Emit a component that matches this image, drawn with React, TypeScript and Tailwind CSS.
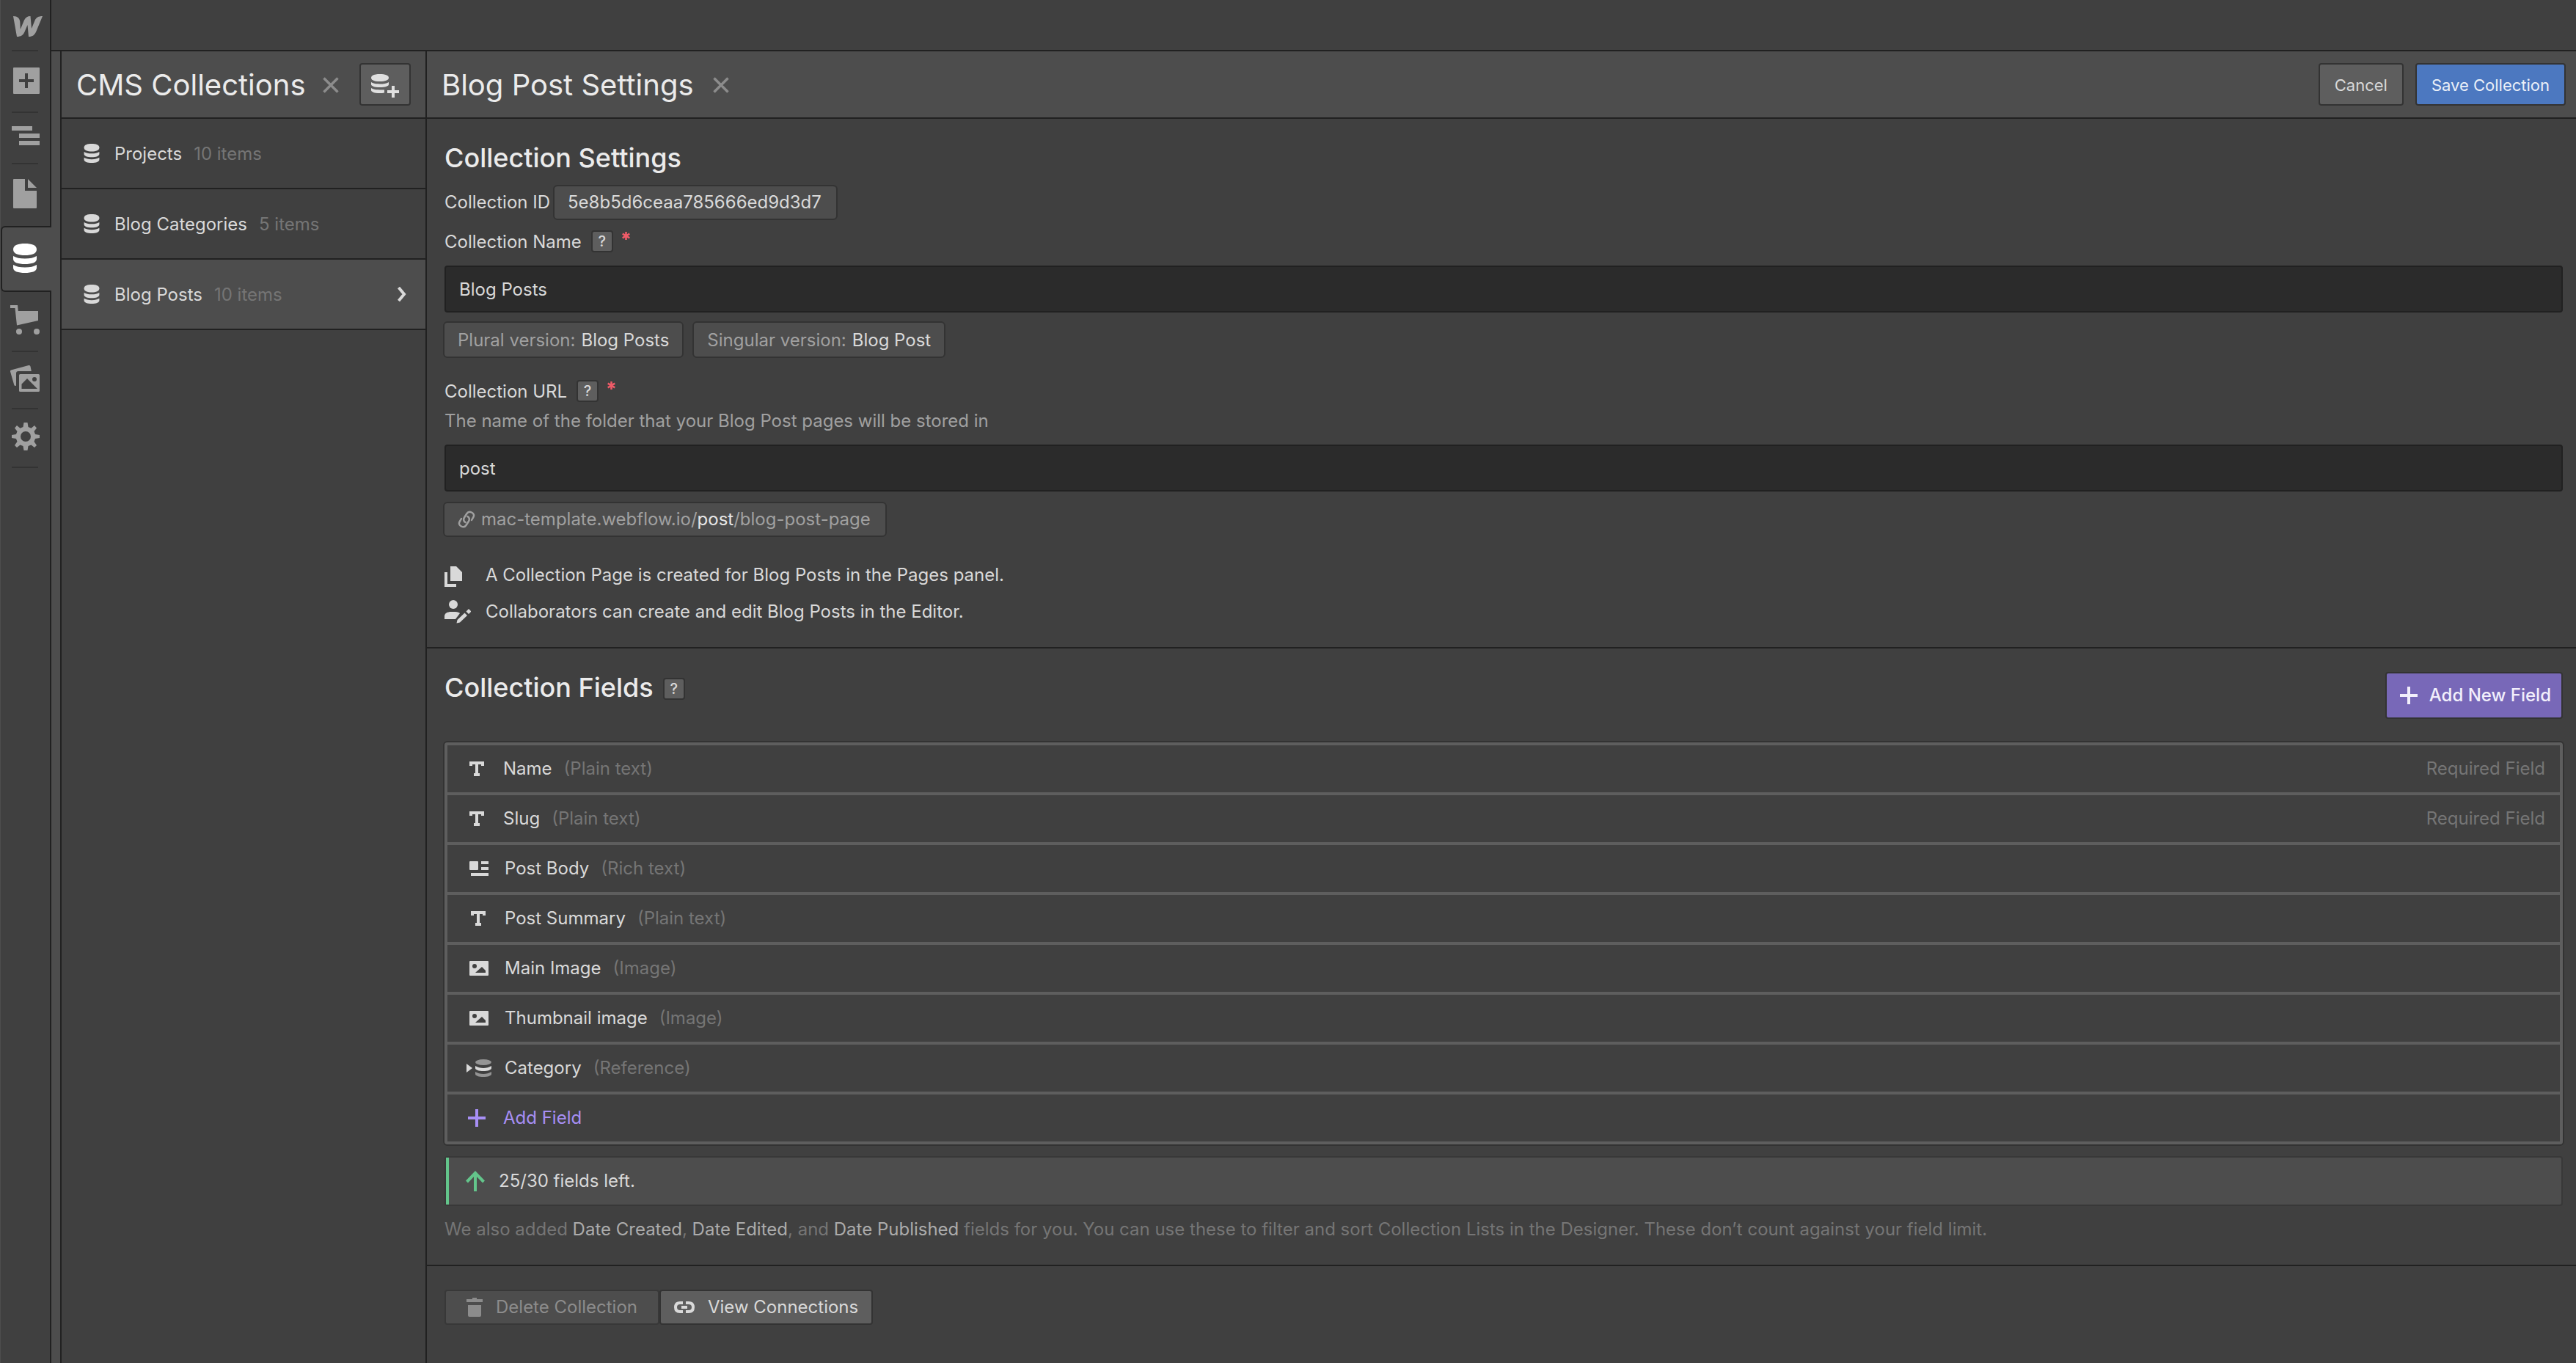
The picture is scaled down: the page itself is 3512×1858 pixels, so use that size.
import type { ReactNode } from "react";

type IconProps = { className?: string };

function LogoIcon() {
  return (
    <svg className="h-7 w-10" viewBox="0 0 40 28" fill="currentColor" aria-hidden="true">
      <path d="M0 0C6 0 9 3 9.300 8L9.800 18L15 5.500C16.500 2 19.500 0 23.500 0L25 17L29.500 6C31 2 34.500 0 40 0L31.500 20.500C29.500 25.500 26.500 28 21 28L19.500 12L15.500 21.500C13.500 26 10.500 28 5 28Z" />
    </svg>
  );
}

function AddIcon() {
  return (
    <svg className="size-9" viewBox="0 0 36 36" fill="currentColor" aria-hidden="true">
      <path fillRule="evenodd" d="M1 0H35Q36 0 36 1V35Q36 36 35 36H1Q0 36 0 35V1Q0 0 1 0ZM16 8V16H8V20H16V28H20V20H28V16H20V8Z" />
    </svg>
  );
}

function NavigatorIcon() {
  return (
    <svg className="h-[26px] w-[38px]" viewBox="0 0 38 26" fill="currentColor" aria-hidden="true">
      <path d="M0 0H28V6H0ZM10 10H38V16H10ZM10 20H38V26H10Z" />
    </svg>
  );
}

function PageIcon() {
  return (
    <svg className="h-10 w-8" viewBox="0 0 32 40" fill="currentColor" aria-hidden="true">
      <path d="M1 0H16V16H32V39Q32 40 31 40H1Q0 40 0 39V1Q0 0 1 0ZM20 0L32 12H20Z" />
    </svg>
  );
}

function DatabaseIcon({ className }: IconProps) {
  return (
    <svg className={className} viewBox="0 0 32 40" fill="currentColor" aria-hidden="true">
      <path d="M0 8C0 2 7 0 16 0S32 2 32 8S25 16 16 16S0 14 0 8Z" />
      <path d="M0 17C4 19.500 9 20.500 16 20.500S28 19.500 32 17V21C32 26 25 28 16 28S0 26 0 21Z" />
      <path d="M0 29C4 31.500 9 32.500 16 32.500S28 31.500 32 29V33C32 38 25 40 16 40S0 38 0 33Z" />
    </svg>
  );
}

function CartIcon() {
  return (
    <svg className="size-10" viewBox="0 0 40 40" fill="currentColor" aria-hidden="true">
      <path d="M0 0H10L10.800 8H38V21L9 27.500L6.500 4H0Z" />
      <circle cx="12" cy="36" r="4" />
      <circle cx="36" cy="36" r="4" />
    </svg>
  );
}

function AssetsIcon() {
  return (
    <svg className="h-9 w-10" viewBox="0 0 40 36" fill="currentColor" aria-hidden="true">
      <path d="M1 6.500L25 0Q27 -0.300 27.500 1.500L28.800 8H11Q8 8 8 11V28L5.500 27.500L0 8.500Q-0.300 7 1 6.500Z" />
      <path fillRule="evenodd" d="M13.500 12H38.500Q40 12 40 13.500V34.500Q40 36 38.500 36H13.500Q12 36 12 34.500V13.500Q12 12 13.500 12ZM15.500 32H37L23 18L15.500 25.500ZM33 16A3 3 0 1 0 33 22A3 3 0 1 0 33 16Z" />
    </svg>
  );
}

function GearIcon() {
  return (
    <svg className="size-[38px]" viewBox="0 0 38 38" fill="currentColor" aria-hidden="true">
      <path fillRule="evenodd" d="M16.500 0H21.500L22.500 6L26.500 7.800L31 4L34 7.500L30.500 12L32 16L38 17V21L32 22L30.500 26L34 31L31 34L26.500 30.500L22.500 32L21.500 38H16.500L15.500 32L11.500 30.500L7 34L4 31L7.500 26L6 22L0 21V17L6 16L7.500 12L4 7.500L7 4L11.500 7.800L15.500 6ZM19 12A7 7 0 1 0 19 26A7 7 0 1 0 19 12Z" />
    </svg>
  );
}

function CloseIcon() {
  return (
    <svg className="size-[22px]" viewBox="0 0 22 22" fill="none" stroke="currentColor" strokeWidth="3.500" aria-hidden="true">
      <path d="M1.500 1.500L20.500 20.500M20.500 1.500L1.500 20.500" />
    </svg>
  );
}

function NewCollectionIcon() {
  return (
    <svg className="h-8 w-[38px]" viewBox="0 0 38 32" fill="currentColor" aria-hidden="true">
      <path d="M0 5C0 1.500 5 0 12 0S24 1.500 24 5S19 10 12 10S0 8.500 0 5Z" />
      <path d="M0 11C3 13 7 13.500 12 13.500S21 13 24 11V14C24 16.500 19 18 12 18S0 16.500 0 14Z" />
      <path d="M0 19C3 21 7 21.500 12 21.500H18V25.500C16 26 14 26 12 26C5 26 0 24.500 0 22Z" />
      <path d="M28 16H32V22H38V26H32V32H28V26H22V22H28Z" />
    </svg>
  );
}

function ChevronIcon() {
  return (
    <svg className="h-5 w-3" viewBox="0 0 12 20" fill="none" stroke="currentColor" strokeWidth="4" aria-hidden="true">
      <path d="M1.500 1L9 10L1.500 19" />
    </svg>
  );
}

function ChainIcon() {
  return (
    <svg className="size-6" viewBox="0 0 24 24" fill="none" stroke="currentColor" strokeWidth="2.500" strokeLinecap="round" aria-hidden="true">
      <path d="M10.500 16C8 14.500 7.500 12 9 9.500L12.500 4C14 1.700 16.500 1.200 19 2.500C22 4 22.800 6.500 21.300 9L19 13" />
      <path d="M13.500 8C16 9.500 16.500 12 15 14.500L11.500 20C10 22.300 7.500 22.800 5 21.500C2 20 1.200 17.500 2.700 15L5 11" />
    </svg>
  );
}

function PagesIcon() {
  return (
    <svg className="h-7 w-6" viewBox="0 0 24 28" fill="currentColor" aria-hidden="true">
      <path d="M8 0H16L24 8V20H8ZM0 8H4V24H16V28H0Z" />
    </svg>
  );
}

function EditorIcon() {
  return (
    <svg className="h-8 w-9" viewBox="0 0 36 32" fill="currentColor" aria-hidden="true">
      <ellipse cx="12" cy="6" rx="6" ry="6" />
      <path d="M0 26V22C0 18 4 16 9 16H15C18 16 20 17 21 18L15 26Z" />
      <path d="M27.500 17.500L31 21L21 30.500L16.500 31.500L17.500 27ZM29.500 15.500L33 12L36.500 15.500L33 19Z" />
    </svg>
  );
}

function TextIcon() {
  return (
    <svg className="size-5" viewBox="0 0 20 20" fill="currentColor" aria-hidden="true">
      <path d="M0 0H20V6H16V4H12V16H14V20H6V16H8V4H4V6H0Z" />
    </svg>
  );
}

function RichTextIcon() {
  return (
    <svg className="h-5 w-[26px]" viewBox="0 0 26 20" fill="currentColor" aria-hidden="true">
      <path d="M1 0H11Q12 0 12 1V11Q12 12 11 12H1Q0 12 0 11V1Q0 0 1 0ZM16 0H26V4H16ZM16 8H26V12H16ZM2 16H26V20H2Z" />
    </svg>
  );
}

function ImageIcon() {
  return (
    <svg className="h-5 w-[26px]" viewBox="0 0 26 20" fill="currentColor" aria-hidden="true">
      <path fillRule="evenodd" d="M1 0H25Q26 0 26 1V19Q26 20 25 20H1Q0 20 0 19V1Q0 0 1 0ZM7 4A3 3 0 1 0 7 10A3 3 0 1 0 7 4ZM8 16H22V13L17 8Z" />
    </svg>
  );
}

function ReferenceIcon() {
  return (
    <svg className="h-6 w-[34px]" viewBox="0 0 34 24" fill="currentColor" aria-hidden="true">
      <path d="M0 6L8 12L0 18Z" />
      <ellipse cx="23" cy="4" rx="11" ry="4" opacity="0.55" />
      <path d="M12 9C15 11 19 12 23 12S31 11 34 9V12C34 14.500 29 16 23 16S12 14.500 12 12Z" />
      <path opacity="0.55" d="M12 17C15 19 19 20 23 20S31 19 34 17V20C34 22.500 29 24 23 24S12 22.500 12 20Z" />
    </svg>
  );
}

function PlusIcon() {
  return (
    <svg className="size-6" viewBox="0 0 24 24" fill="currentColor" aria-hidden="true">
      <path d="M10 0H14V10H24V14H14V24H10V14H0V10H10Z" />
    </svg>
  );
}

function ArrowUpIcon() {
  return (
    <svg className="h-7 w-[26px]" viewBox="0 0 26 28" fill="none" stroke="currentColor" strokeWidth="4" aria-hidden="true">
      <path d="M13 28V4M1.500 15L13 3L24.500 15" />
    </svg>
  );
}

function TrashIcon() {
  return (
    <svg className="h-[26px] w-[22px]" viewBox="0 0 22 26" fill="currentColor" aria-hidden="true">
      <path d="M8 0H14V2H22V6H0V2H8ZM2 10H20V24Q20 26 18 26H4Q2 26 2 24Z" />
    </svg>
  );
}

function ConnectionIcon() {
  return (
    <svg className="h-4 w-7" viewBox="0 0 28 16" fill="currentColor" aria-hidden="true">
      <path d="M12 0V4H8Q4 4 4 8T8 12H12V16H8Q0 16 0 8T8 0ZM16 0H20Q28 0 28 8T20 16H16V12H20Q24 12 24 8T20 4H16ZM10 6H18V10H10Z" />
    </svg>
  );
}

function Divider() {
  return <div className="h-[2px] w-9 bg-[#333]" />;
}

function RailButton({ label, className, children }: { label: string; className: string; children: ReactNode }) {
  return (
    <button type="button" aria-label={label} className={className}>
      {children}
    </button>
  );
}

function Rail() {
  return (
    <nav aria-label="Tools" className="flex w-[70px] shrink-0 flex-col border-l border-[#4d4d4d] bg-[#404040] text-[#a0a0a0]">
      <div className="flex h-[308px] flex-col items-start border-r-2 border-[#212121] pl-[15px]">
        <RailButton label="Webflow" className="flex h-[68px] items-center pt-[4px] pl-[2px]"><LogoIcon /></RailButton>
        <Divider />
        <RailButton label="Add elements" className="flex h-[82px] items-center pb-[2px] pl-[2px]"><AddIcon /></RailButton>
        <Divider />
        <RailButton label="Navigator" className="flex h-[68px] items-center pb-[6px]"><NavigatorIcon /></RailButton>
        <Divider />
        <RailButton label="Pages" className="flex h-20 items-center pl-[2px]"><PageIcon /></RailButton>
      </div>
      <RailButton label="CMS" className="flex h-[90px] items-center rounded-l-md border-2 border-r-0 border-[#212121] bg-[#4d4d4d] pl-[15px] pb-[2px] text-white">
        <DatabaseIcon className="h-10 w-8" />
      </RailButton>
      <div className="flex flex-1 flex-col items-start border-r-2 border-[#212121] pl-[15px]">
        <RailButton label="Ecommerce" className="-ml-[2px] flex h-20 items-center pb-[4px]"><CartIcon /></RailButton>
        <Divider />
        <RailButton label="Assets" className="-ml-[2px] flex h-[76px] items-center pb-[4px]"><AssetsIcon /></RailButton>
        <Divider />
        <RailButton label="Settings" className="flex h-[78px] items-center pb-[4px]"><GearIcon /></RailButton>
        <Divider />
      </div>
    </nav>
  );
}

const collections = [
  { name: "Projects", count: "10 items", active: false },
  { name: "Blog Categories", count: "5 items", active: false },
  { name: "Blog Posts", count: "10 items", active: true },
];

function CollectionsPanel() {
  return (
    <aside className="flex w-[512px] shrink-0 border-r-2 border-[#212121]">
      <div className="w-3 shrink-0 bg-[#4d4d4d]" />
      <div className="flex flex-1 flex-col border-l-2 border-[#212121]">
        <header className="flex h-[92px] items-center border-b-2 border-[#212121] bg-[#4d4d4d] pl-5 pr-5">
          <h2 className="whitespace-nowrap pt-[2px] text-[40px] leading-[48px] text-[#ebebeb]">CMS Collections</h2>
          <button type="button" aria-label="Close collections" className="ml-auto pt-[2px] text-[#8c8c8c]"><CloseIcon /></button>
          <button type="button" aria-label="New collection" className="ml-7 flex h-[58px] w-[70px] items-center justify-center rounded border-2 border-[#333] bg-[#5e5e5e] pt-[4px] text-[#e0e0e0]">
            <NewCollectionIcon />
          </button>
        </header>
        <ul>
          {collections.map((item) => (
            <li key={item.name} className={item.active ? "border-b-2 border-[#212121] bg-[#4d4d4d]" : "border-b-2 border-[#212121]"}>
              <button type="button" className="flex h-[94px] w-full items-center pl-[30px] pr-[26px] text-left">
                <DatabaseIcon className="h-[26px] w-[22px] text-[#d9d9d9]" />
                <span className="ml-5 pt-[2px]">{item.name}</span>
                <span className="ml-4 pt-[2px] text-[#757575]">{item.count}</span>
                {item.active && <span className="ml-auto"><ChevronIcon /></span>}
              </button>
            </li>
          ))}
        </ul>
      </div>
    </aside>
  );
}

function Help({ className }: IconProps) {
  return (
    <span className={className}>
      <button type="button" aria-label="Help" className="flex size-[30px] items-center justify-center rounded border-2 border-[#333] bg-[#5e5e5e] text-[20px] font-medium leading-6 text-[#d9d9d9]">
        ?
      </button>
    </span>
  );
}

function FieldLabel({ htmlFor, children }: { htmlFor: string; children: ReactNode }) {
  return (
    <div className="flex h-[30px] items-center">
      <label htmlFor={htmlFor} className="pt-[2px]">{children}</label>
      <Help className="ml-[13px]" />
      <svg className="ml-3 mt-[2px] size-[11px] self-start text-[#ef5b68]" viewBox="0 0 11 11" stroke="currentColor" strokeWidth="2.500" aria-label="required">
        <path d="M5.500 0V11M0.700 2.700L10.300 8.300M10.300 2.700L0.700 8.300" />
      </svg>
    </div>
  );
}

const chip = "flex h-12 items-center rounded-md border-2 border-[#333] bg-[#4d4d4d] pl-[18px] pr-5 whitespace-nowrap";
const tallChip = "flex h-[50px] items-center rounded-md border-2 border-[#333] bg-[#4d4d4d] px-[18px] pt-[2px] whitespace-nowrap";
const textInput = "block h-16 w-full rounded border-2 border-[#212121] bg-[#2b2b2b] px-[18px] text-[#d9d9d9] outline-none";

const fields = [
  { name: "Name", type: "(Plain text)", icon: <TextIcon />, pad: "pl-[30px]", required: true },
  { name: "Slug", type: "(Plain text)", icon: <TextIcon />, pad: "pl-[30px]", required: true },
  { name: "Post Body", type: "(Rich text)", icon: <RichTextIcon />, pad: "pl-[30px]", required: false },
  { name: "Post Summary", type: "(Plain text)", icon: <TextIcon />, pad: "pl-8", required: false },
  { name: "Main Image", type: "(Image)", icon: <ImageIcon />, pad: "pl-[30px]", required: false },
  { name: "Thumbnail image", type: "(Image)", icon: <ImageIcon />, pad: "pl-[30px]", required: false },
  { name: "Category", type: "(Reference)", icon: <ReferenceIcon />, pad: "pl-[26px]", required: false },
];

function SettingsSection() {
  return (
    <section className="border-b-2 border-[#212121] pb-8 pl-6 pr-[18px] pt-[31px]">
      <h2 className="text-[36px] font-medium leading-[44px] text-[#ebebeb]">Collection Settings</h2>
      <div className="mt-[15px] flex items-center">
        <span>Collection ID</span>
        <code className={`ml-1 font-[Inter,sans-serif] ${chip}`}>5e8b5d6ceaa785666ed9d3d7</code>
      </div>
      <div className="mt-[14px]">
        <FieldLabel htmlFor="collection-name">Collection Name</FieldLabel>
        <input id="collection-name" type="text" defaultValue="Blog Posts" className={`mt-[18px] ${textInput}`} />
      </div>
      <div className="-ml-[2px] mt-3 flex gap-3">
        <div className={tallChip}>
          <span className="text-[#a0a0a0]">Plural version:</span>
          <span className="ml-2">Blog Posts</span>
        </div>
        <div className={tallChip}>
          <span className="text-[#a0a0a0]">Singular version:</span>
          <span className="ml-2">Blog Post</span>
        </div>
      </div>
      <div className="mt-[30px]">
        <FieldLabel htmlFor="collection-url">Collection URL</FieldLabel>
        <p className="mt-[10px] text-[#a0a0a0]">The name of the folder that your Blog Post pages will be stored in</p>
        <input id="collection-url" type="text" defaultValue="post" className={`mt-4 ${textInput}`} />
      </div>
      <div className="-ml-[2px] mt-[14px] flex">
        <div className={`text-[#a0a0a0] ${chip}`}>
          <ChainIcon />
          <span className="ml-2">mac-template.webflow.io/<span className="text-[#e6e6e6]">post</span>/blog-post-page</span>
        </div>
      </div>
      <ul className="mt-9 flex flex-col gap-[18px]">
        <li className="flex items-center">
          <span className="w-14 pt-[4px]"><PagesIcon /></span>
          A Collection Page is created for Blog Posts in the Pages panel.
        </li>
        <li className="flex items-center">
          <span className="w-14"><EditorIcon /></span>
          Collaborators can create and edit Blog Posts in the Editor.
        </li>
      </ul>
    </section>
  );
}

function FieldsSection() {
  return (
    <section className="border-b-2 border-[#212121] pb-8 pl-6 pr-[18px] pt-8">
      <div className="flex items-start justify-between">
        <div className="flex items-center">
          <h2 className="text-[36px] font-medium leading-[42px] text-[#ebebeb]">Collection Fields</h2>
          <Help className="ml-[13px] mt-1" />
        </div>
        <button type="button" className="flex h-16 items-center gap-4 rounded border-2 border-[#333] bg-[#7868b8] pl-[18px] pr-[14px] font-medium text-[#f2effb]">
          <PlusIcon />
          Add New Field
        </button>
      </div>
      <ul className="mt-8 divide-y-4 divide-[#5e5e5e] rounded border-4 border-[#5e5e5e] ring-2 ring-[#333]">
        {fields.map((field) => (
          <li key={field.name} className="flex h-[68px] items-center pr-5">
            <span className={`shrink-0 ${field.required ? "w-[76px]" : "w-[78px]"} ${field.pad}`}>{field.icon}</span>
            <span>{field.name}</span>
            <span className="ml-4 text-[#757575]">{field.type}</span>
            {field.required && <span className="ml-auto text-[#757575]">Required Field</span>}
          </li>
        ))}
        <li>
          <button type="button" className="flex h-16 w-full items-center text-left text-[#a78ff5]">
            <span className="w-[76px] shrink-0 pl-7"><PlusIcon /></span>
            Add Field
          </button>
        </li>
      </ul>
      <div className="mt-4 rounded border-2 border-[#383838] bg-[#4d4d4d]">
        <div className="flex h-16 items-center border-l-4 border-[#63c58b] pl-[23px]">
          <span className="text-[#63c58b]"><ArrowUpIcon /></span>
          <span className="ml-[19px]">25/30 fields left.</span>
        </div>
      </div>
      <p className="mt-4 text-[#757575]">
        We also added <span className="text-[#ababab]">Date Created</span>, <span className="text-[#ababab]">Date Edited</span>, and{" "}
        <span className="text-[#ababab]">Date Published</span> fields for you. You can use these to filter and sort Collection Lists in the Designer. These don’t count against your field limit.
      </p>
    </section>
  );
}

function SettingsPanel() {
  return (
    <main className="min-w-0 flex-1">
      <header className="flex h-[92px] items-center border-b-2 border-[#212121] bg-[#4d4d4d] pl-5 pr-[14px]">
        <h1 className="whitespace-nowrap pt-[2px] text-[40px] leading-[48px] text-[#ebebeb]">Blog Post Settings</h1>
        <button type="button" aria-label="Close settings" className="ml-[26px] pt-[2px] text-[#8c8c8c]"><CloseIcon /></button>
        <div className="ml-auto flex gap-4 text-[22px]">
          <button type="button" className="h-[58px] rounded border-2 border-[#333] bg-[#5e5e5e] px-5 pt-[2px]">Cancel</button>
          <button type="button" className="h-[58px] rounded border-2 border-[#333] bg-[#4c78c0] px-5 pt-[2px] text-[#ebf0f8]">Save Collection</button>
        </div>
      </header>
      <SettingsSection />
      <FieldsSection />
      <footer className="flex pl-6 pt-8">
        <button type="button" disabled className="flex h-12 items-center rounded border-2 border-[#383838] bg-[#4d4d4d] px-7 text-[#8c8c8c]">
          <TrashIcon />
          <span className="ml-[18px]">Delete Collection</span>
        </button>
        <button type="button" className="flex h-12 items-center rounded border-2 border-[#333] bg-[#5e5e5e] px-[18px]">
          <ConnectionIcon />
          <span className="ml-[18px]">View Connections</span>
        </button>
      </footer>
    </main>
  );
}

export default function App() {
  return (
    <div className="flex min-h-screen bg-[#404040] font-[Inter,sans-serif] text-[24px] leading-8 text-[#d9d9d9] antialiased">
      <Rail />
      <div className="flex min-w-0 flex-1 flex-col">
        <div className="h-[70px] border-b-2 border-[#212121]" />
        <div className="flex flex-1">
          <CollectionsPanel />
          <SettingsPanel />
        </div>
      </div>
    </div>
  );
}
